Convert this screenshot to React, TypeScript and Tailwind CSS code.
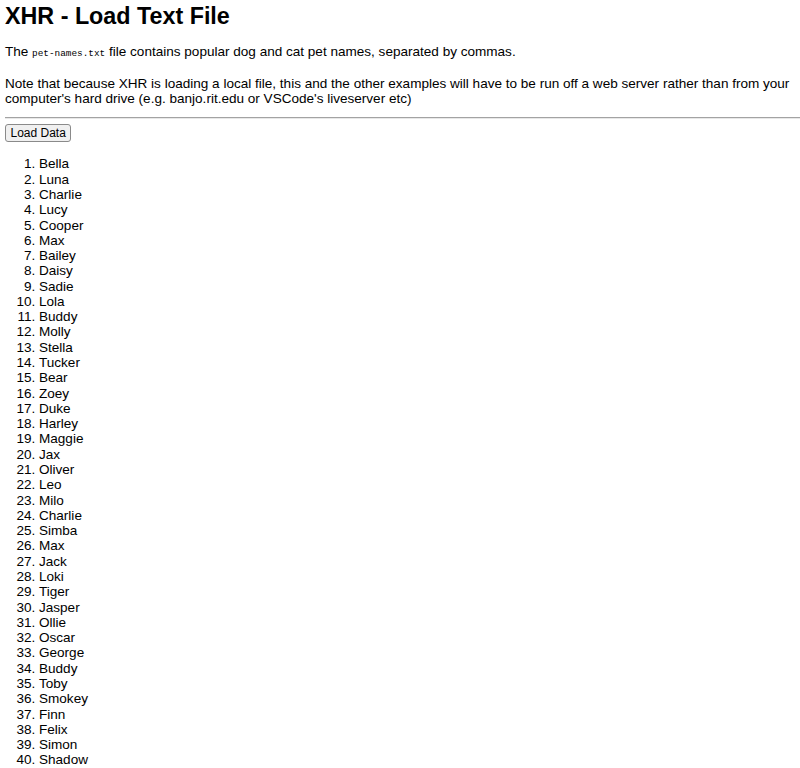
import React from "react";

const names = [
  "Bella", "Luna", "Charlie", "Lucy", "Cooper", "Max", "Bailey", "Daisy", "Sadie", "Lola",
  "Buddy", "Molly", "Stella", "Tucker", "Bear", "Zoey", "Duke", "Harley", "Maggie", "Jax",
  "Oliver", "Leo", "Milo", "Charlie", "Simba", "Max", "Jack", "Loki", "Tiger", "Jasper",
  "Ollie", "Oscar", "George", "Buddy", "Toby", "Smokey", "Finn", "Felix", "Simon", "Shadow",
];

export default function App() {
  return (
    <div className="h-[768px] overflow-hidden bg-white">
      <div className="pl-[5px] text-black text-[13.55px] leading-[15.3px] font-['Liberation_Sans',Arial,sans-serif]">
        <h1 className="mt-[3px] text-[23.3px] leading-[26px] font-bold">XHR - Load Text File</h1>
        <p className="mt-[15px]">
          The <code className="font-['Liberation_Mono',monospace] text-[9.4px]">pet-names.txt</code> file contains popular dog and cat pet names, separated by commas.
        </p>
        <p className="mt-[14.5px]">
          Note that because XHR is loading a local file, this and the other examples will have to be run off a web server rather than from your computer's hard drive (e.g. banjo.rit.edu or VSCode's liveserver etc)
        </p>
        <div className="mt-[11px] h-[2px] border-t border-t-[#a3a3a3] border-b border-b-[#e8e8e8]" />
        <button className="mt-[5px] h-[18px] px-[4.5px] text-[12px] leading-[16px] border border-[#8a8a8a] rounded-[3px] bg-[#f0f0f0] text-black font-['Liberation_Sans',Arial,sans-serif]">
          Load Data
        </button>
        <ol className="list-decimal pl-[34px] mt-[14px] leading-[15.28px]">
          {names.map((n, i) => (
            <li key={i}>{n}</li>
          ))}
        </ol>
      </div>
    </div>
  );
}
